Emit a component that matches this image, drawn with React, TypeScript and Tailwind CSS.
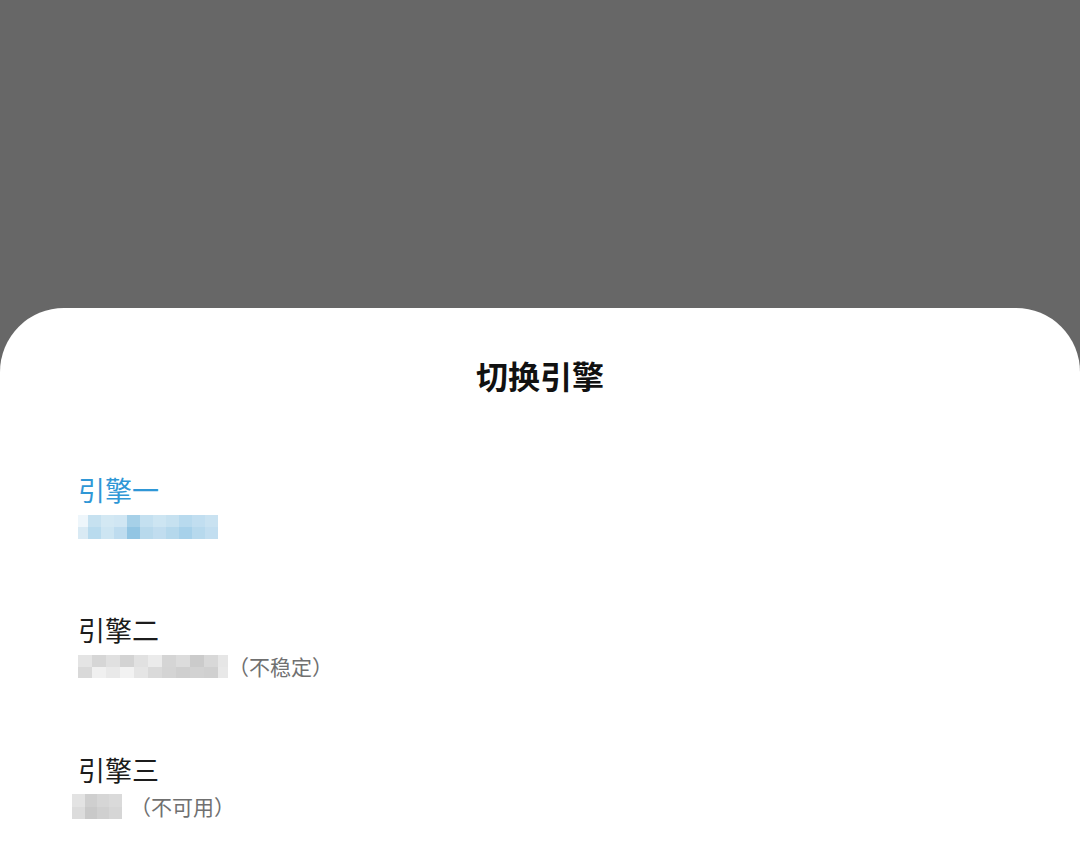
import React from "react";

const font = { fontFamily: '"Noto Sans CJK SC", "Noto Sans", sans-serif' };

function Cells({ rows }: { rows: string[][] }) {
  return (
    <div className="flex flex-col blur-[0.6px]">
      {rows.map((r, i) => (
        <div key={i} className="flex">
          {r.map((c, j) => (
            <div key={j} className={c} />
          ))}
        </div>
      ))}
    </div>
  );
}

const blueRows = [
  ["w-[10px] h-[12px] bg-[#eef6fb]", "w-[13px] h-[12px] bg-[#c6e1f0]", "w-[13px] h-[12px] bg-[#d3e8f3]", "w-[13px] h-[12px] bg-[#d0e6f3]", "w-[13px] h-[12px] bg-[#a6d0e8]", "w-[13px] h-[12px] bg-[#c4e0f0]", "w-[13px] h-[12px] bg-[#cde5f2]", "w-[13px] h-[12px] bg-[#c6e1f0]", "w-[13px] h-[12px] bg-[#b8daee]", "w-[13px] h-[12px] bg-[#c1def0]", "w-[13px] h-[12px] bg-[#c9e2f1]"],
  ["w-[10px] h-[12px] bg-[#d9eaf4]", "w-[13px] h-[12px] bg-[#b9dbee]", "w-[13px] h-[12px] bg-[#cde5f2]", "w-[13px] h-[12px] bg-[#bedcef]", "w-[13px] h-[12px] bg-[#92c5e3]", "w-[13px] h-[12px] bg-[#b8d9ec]", "w-[13px] h-[12px] bg-[#c1ddef]", "w-[13px] h-[12px] bg-[#b5d8ec]", "w-[13px] h-[12px] bg-[#a7d1ea]", "w-[13px] h-[12px] bg-[#b7d9ed]", "w-[13px] h-[12px] bg-[#c2def0]"],
];

const grayRows2 = [
  ["w-[14px] h-[12px] bg-[#e4e4e4]", "w-[14px] h-[12px] bg-[#d6d6d6]", "w-[14px] h-[12px] bg-[#e0e0e0]", "w-[14px] h-[12px] bg-[#d3d3d3]", "w-[14px] h-[12px] bg-[#e1e1e1]", "w-[14px] h-[12px] bg-[#ebebeb]", "w-[14px] h-[12px] bg-[#d5d5d5]", "w-[14px] h-[12px] bg-[#dcdcdc]", "w-[14px] h-[12px] bg-[#cbcbcb]", "w-[14px] h-[12px] bg-[#d8d8d8]", "w-[10px] h-[12px] bg-[#e6e6e6]"],
  ["w-[14px] h-[11px] bg-[#d9d9d9]", "w-[14px] h-[11px] bg-[#f0f0f0]", "w-[14px] h-[11px] bg-[#e9e9e9]", "w-[14px] h-[11px] bg-[#f2f2f2]", "w-[14px] h-[11px] bg-[#e5e5e5]", "w-[14px] h-[11px] bg-[#dadada]", "w-[14px] h-[11px] bg-[#d4d4d4]", "w-[14px] h-[11px] bg-[#cfcfcf]", "w-[14px] h-[11px] bg-[#d2d2d2]", "w-[14px] h-[11px] bg-[#d0d0d0]", "w-[10px] h-[11px] bg-[#e8e8e8]"],
];

const grayRows3 = [
  ["w-[13px] h-[13px] bg-[#e3e3e3]", "w-[12px] h-[13px] bg-[#cfcfcf]", "w-[12px] h-[13px] bg-[#d6d6d6]", "w-[13px] h-[13px] bg-[#dadada]"],
  ["w-[13px] h-[12px] bg-[#dcdcdc]", "w-[12px] h-[12px] bg-[#c9c9c9]", "w-[12px] h-[12px] bg-[#d0d0d0]", "w-[13px] h-[12px] bg-[#d6d6d6]"],
];

export default function App() {
  return (
    <div className="w-[1080px] h-[857px] bg-[#676767] flex flex-col overflow-hidden" style={font}>
      <div className="h-[308px] shrink-0" />
      <div className="flex-1 bg-white rounded-t-[64px] flex flex-col">
        <div className="pt-[47px] text-center text-[32px] leading-[40px] font-bold text-[#111111]">切换引擎</div>
        <div className="flex flex-col gap-[68px] pt-[76px] pl-[78px]">
          <div className="flex flex-col">
            <div className="text-[27px] leading-[38px] text-[#2f97d6]">引擎一</div>
            <div className="h-[34px] flex items-center pt-[1px]">
              <Cells rows={blueRows} />
            </div>
          </div>
          <div className="flex flex-col">
            <div className="text-[27px] leading-[38px] text-[#1c1c1c]">引擎二</div>
            <div className="h-[34px] flex items-center">
              <Cells rows={grayRows2} />
              <span className="text-[21px] leading-[34px] text-[#707070]">（不稳定）</span>
            </div>
          </div>
          <div className="flex flex-col">
            <div className="text-[27px] leading-[38px] text-[#1c1c1c]">引擎三</div>
            <div className="h-[34px] flex items-center -ml-[6px]">
              <Cells rows={grayRows3} />
              <span className="text-[21px] leading-[34px] text-[#707070] ml-[8px]">（不可用）</span>
            </div>
          </div>
        </div>
      </div>
    </div>
  );
}
